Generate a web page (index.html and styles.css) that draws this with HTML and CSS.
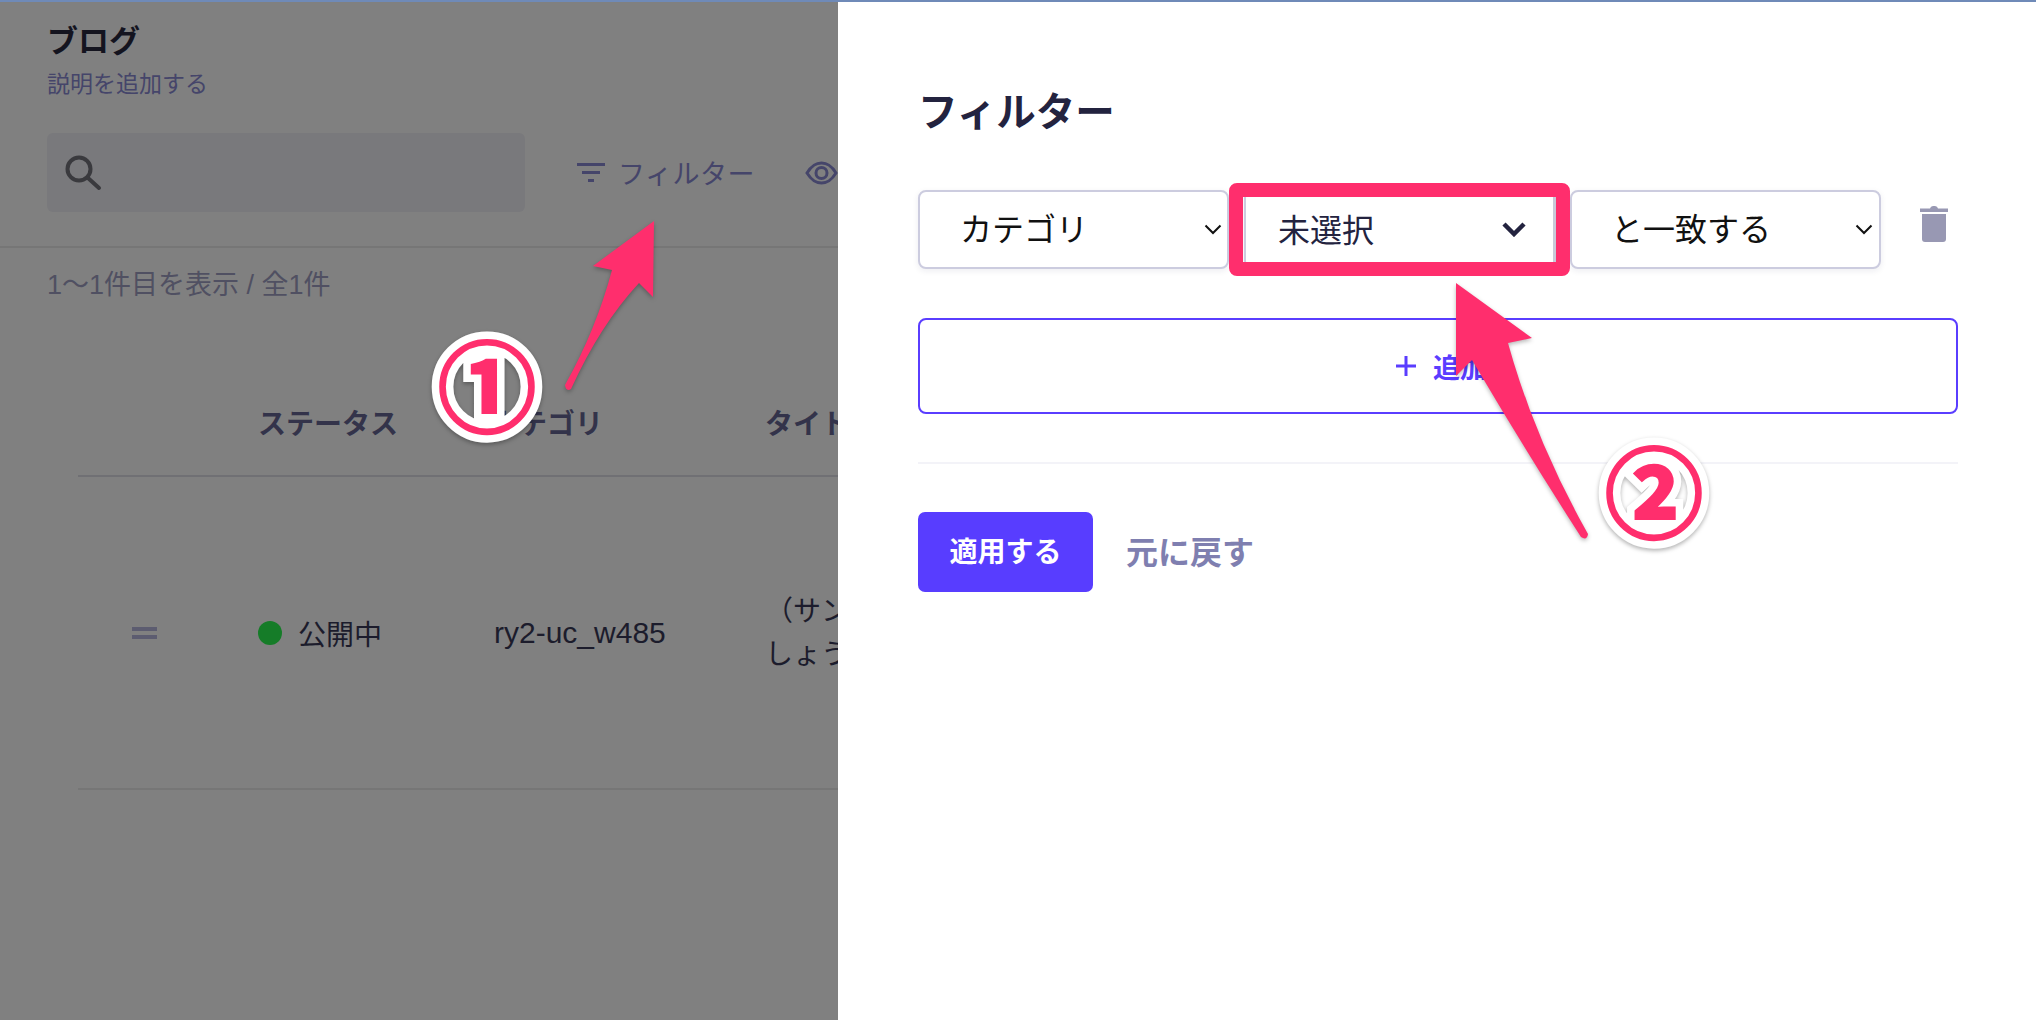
FILE: index.html
```html
<!DOCTYPE html>
<html lang="ja">
<head>
    <meta charset="UTF-8">
    <meta name="viewport" content="width=device-width, initial-scale=1.0">
    <title>フィルター</title>
    <link rel="stylesheet" href="styles.css">
</head>
<body>
    <div class="screen">
        <!-- dimmed list page behind the drawer -->
        <section class="page">
            <header class="page-head">
                <h1>ブログ</h1>
                <p>説明を追加する</p>
            </header>
            <div class="toolbar">
                <div class="search">
                    <svg width="38" height="38" viewBox="0 0 38 38" fill="none" stroke="#3a3a3e" stroke-width="4" stroke-linecap="round"><circle cx="15" cy="15" r="11.5"/><path d="M24 24l11 10"/></svg>
                </div>
                <div class="tool tool-filter">
                    <svg width="28" height="20" viewBox="0 0 28 20" fill="#45456a"><rect x="0" y="0" width="28" height="3"/><rect x="5" y="8" width="18" height="3"/><rect x="11" y="16" width="6" height="3"/></svg>
                    <span>フィルター</span>
                </div>
                <div class="tool tool-eye">
                    <svg width="33" height="24" viewBox="0 0 33 24" fill="none" stroke="#45456a" stroke-width="3"><path d="M2 12C7 4 11 2 16.500 2S26 4 31 12C26 20 22 22 16.500 22S7 20 2 12z"/><circle cx="16.500" cy="12" r="5.500"/></svg>
                </div>
            </div>
            <p class="count">1〜1件目を表示 / 全1件</p>
            <div class="table">
                <div class="table-row table-head">
                    <div></div>
                    <div>ステータス</div>
                    <div class="head-category">カテゴリ</div>
                    <div>タイトル</div>
                </div>
                <div class="table-row table-body">
                    <div class="drag"><i></i><i></i></div>
                    <div class="status"><i class="dot"></i>公開中</div>
                    <div class="slug">ry2-uc_w485</div>
                    <div class="title-cell">（サンプル）はじめましょう</div>
                </div>
            </div>
        </section>

        <!-- filter drawer -->
        <aside class="drawer">
            <h2>フィルター</h2>
            <div class="filter-row">
                <div class="select select-field"><span>カテゴリ</span>
                    <svg width="18" height="11" viewBox="0 0 18 11" fill="none" stroke="#111" stroke-width="2"><path d="M1.500 1.500L9 9l7.500-7.500"/></svg>
                </div>
                <div class="select select-value"><span>未選択</span>
                    <svg width="24" height="15" viewBox="0 0 24 15" fill="none" stroke="#23233f" stroke-width="4.500"><path d="M2 2l10 10L22 2"/></svg>
                </div>
                <div class="select select-match"><span>と一致する</span>
                    <svg width="18" height="11" viewBox="0 0 18 11" fill="none" stroke="#111" stroke-width="2"><path d="M1.500 1.500L9 9l7.500-7.500"/></svg>
                </div>
                <svg class="trash" width="28" height="36" viewBox="0 0 28 36" fill="#9898b3"><path d="M10 2.500Q10.500 0 13 0h2q2.500 0 3 2.500h10V6H0V2.500z"/><path d="M2 8h24v25q0 3-3 3H5q-3 0-3-3z"/></svg>
            </div>
            <button class="add-btn">
                <svg width="22" height="22" viewBox="0 0 22 22" fill="none" stroke="#5a3dff" stroke-width="3"><path d="M11 1v20M1 11h20"/></svg>
                <span>追加</span>
            </button>
            <hr class="rule">
            <div class="actions">
                <button class="apply-btn">適用する</button>
                <button class="reset-btn">元に戻す</button>
            </div>
        </aside>

        <!-- annotations drawn over the screenshot -->
        <div class="pink-box"></div>
        <svg class="arrows" width="2036" height="1020" viewBox="0 0 2036 1020" fill="#ff2e6d">
            <path d="M654 221L593 266L612 270Q596 330 565 385Q566 392 571 389Q600 325 639 283L653 297z"/>
            <path d="M1456 283L1532 338L1508 343Q1535 440 1588 534Q1587 541 1581 537Q1525 450 1472 360L1456 376z"/>
        </svg>
        <div class="badge badge-one" data-glyph="①">①</div>
        <div class="badge badge-two" data-glyph="②">②</div>
    </div>
</body>
</html>
```

FILE: styles.css
```css
/* Basic reset */
* {
    margin: 0;
    padding: 0;
    box-sizing: border-box;
}

body {
    font-family: "Liberation Sans", "Noto Sans CJK JP", sans-serif;
    background: #ffffff;
    overflow: hidden;
}

button {
    font-family: inherit;
    border: none;
    background: none;
}

.screen {
    position: relative;
    display: flex;
    width: 2036px;
    height: 1020px;
    border-top: 2px solid #6f8ab8;
    overflow: hidden;
}

/* left page */
.page {
    width: 838px;
    flex-shrink: 0;
    background-color: #808080;
    overflow: hidden;
}

.page-head {
    padding: 25px 0 0 47px;
}

.page-head h1 {
    font-size: 31px;
    line-height: 30px;
    font-weight: 700;
    color: #14141f;
}

.page-head p {
    margin-top: 14px;
    font-size: 23px;
    line-height: 27px;
    color: #45456a;
}

.toolbar {
    display: flex;
    align-items: center;
    height: 114px;
    margin-top: 36px;
    padding: 0 0 35px 47px;
    border-bottom: 2px solid #767676;
}

.search {
    display: flex;
    align-items: center;
    width: 480px;
    height: 79px;
    padding-left: 17px;
    background-color: #79797c;
    border-radius: 6px;
}

.tool {
    display: flex;
    align-items: center;
    flex-shrink: 0;
    font-size: 27px;
    letter-spacing: 0.5px;
    color: #45456a;
}

.tool-filter {
    margin-left: 52px;
    gap: 13px;
}

.tool-eye {
    margin-left: 50px;
}

.count {
    padding: 19px 0 0 47px;
    font-size: 27px;
    line-height: 36px;
    color: #505062;
}

.table {
    margin: 0 0 0 78px;
    width: 900px;
}

.table-row {
    display: grid;
    grid-template-columns: 180px 236px 271px 300px;
    align-items: center;
}

.table-head {
    height: 174px;
    padding-top: 65px;
    font-size: 28px;
    font-weight: 700;
    color: #33334a;
    border-bottom: 2px solid #707074;
}

.head-category {
    margin-left: -3px;
}

.table-body {
    height: 313px;
    font-size: 28px;
    color: #1c1c2c;
    border-bottom: 2px solid #767676;
}

.drag {
    display: flex;
    flex-direction: column;
    gap: 4px;
    padding-left: 54px;
}

.drag i {
    display: block;
    width: 25px;
    height: 4px;
    background-color: #5c5c70;
}

.status {
    display: flex;
    align-items: center;
    gap: 16px;
}

.dot {
    width: 24px;
    height: 24px;
    border-radius: 50%;
    background-color: #157c28;
}

.slug {
    font-size: 30px;
}

.title-cell {
    width: 290px;
    line-height: 43px;
}

/* right drawer */
.drawer {
    flex: 1;
    padding: 90px 78px 0 80px;
    background-color: #ffffff;
}

.drawer h2 {
    font-size: 39.5px;
    line-height: 40px;
    font-weight: 700;
    color: #23233f;
}

.filter-row {
    display: flex;
    align-items: flex-start;
    margin-top: 58px;
}

.select {
    display: flex;
    align-items: center;
    justify-content: space-between;
    height: 79px;
    font-size: 32px;
    color: #111111;
    background-color: #ffffff;
    border: 2px solid #ccccdf;
    border-radius: 8px;
    box-shadow: 0 2px 6px rgba(30, 30, 80, 0.08);
}

.select span {
    padding-bottom: 5px;
}

.select-field {
    width: 311px;
    padding: 0 5px 0 40px;
}

.select-value {
    width: 312px;
    margin-left: 15px;
    padding: 0 28px 0 32px;
    color: #23233f;
}

.select-value span {
    padding-bottom: 4px;
}

.select-match {
    width: 311px;
    margin-left: 14px;
    padding: 0 6px 0 39px;
}

.trash {
    margin: 16px 0 0 39px;
}

.add-btn {
    display: flex;
    align-items: center;
    justify-content: center;
    gap: 16px;
    width: 100%;
    height: 96px;
    margin-top: 49px;
    padding-left: 6px;
    font-size: 27px;
    font-weight: 700;
    color: #5a3dff;
    border: 2px solid #5a3dff;
    border-radius: 8px;
}

.rule {
    height: 2px;
    margin-top: 48px;
    border: none;
    background-color: #f3f3f8;
}

.actions {
    display: flex;
    align-items: center;
    margin-top: 48px;
}

.apply-btn {
    width: 175px;
    height: 80px;
    padding-bottom: 4px;
    font-size: 28px;
    font-weight: 700;
    color: #ffffff;
    background-color: #583dff;
    border-radius: 7px;
}

.reset-btn {
    margin-left: 33px;
    padding-bottom: 4px;
    font-size: 32px;
    font-weight: 700;
    color: #7f7fb0;
}

/* annotations */
.pink-box {
    position: absolute;
    left: 1229px;
    top: 181px;
    width: 341px;
    height: 93px;
    border: 14px solid #ff2e6d;
    border-radius: 8px;
}

.pink-box::after {
    content: "";
    position: absolute;
    top: 0;
    bottom: 0;
    right: 0;
    width: 3px;
    background-color: #c9c9d8;
}

.arrows {
    position: absolute;
    left: 0;
    top: -2px;
    filter: drop-shadow(0 2px 2px rgba(0, 0, 0, 0.28));
}

.badge {
    position: absolute;
    width: 120px;
    height: 120px;
    font-family: "Noto Sans CJK JP", sans-serif;
    font-size: 98px;
    font-weight: 700;
    line-height: 120px;
    text-align: center;
    color: #ff2e6d;
    -webkit-text-stroke: 18px #ffffff;
    paint-order: stroke fill;
    filter: drop-shadow(0 2px 2px rgba(0, 0, 0, 0.3));
}

/* second pass thickens the ring and the digit */
.badge::after {
    content: attr(data-glyph);
    position: absolute;
    left: 0;
    top: 0;
    width: 100%;
    -webkit-text-stroke: 3px #ff2e6d;
}

.badge-one {
    left: 427px;
    top: 319px;
}

.badge-two {
    left: 1594px;
    top: 425px;
}
```
